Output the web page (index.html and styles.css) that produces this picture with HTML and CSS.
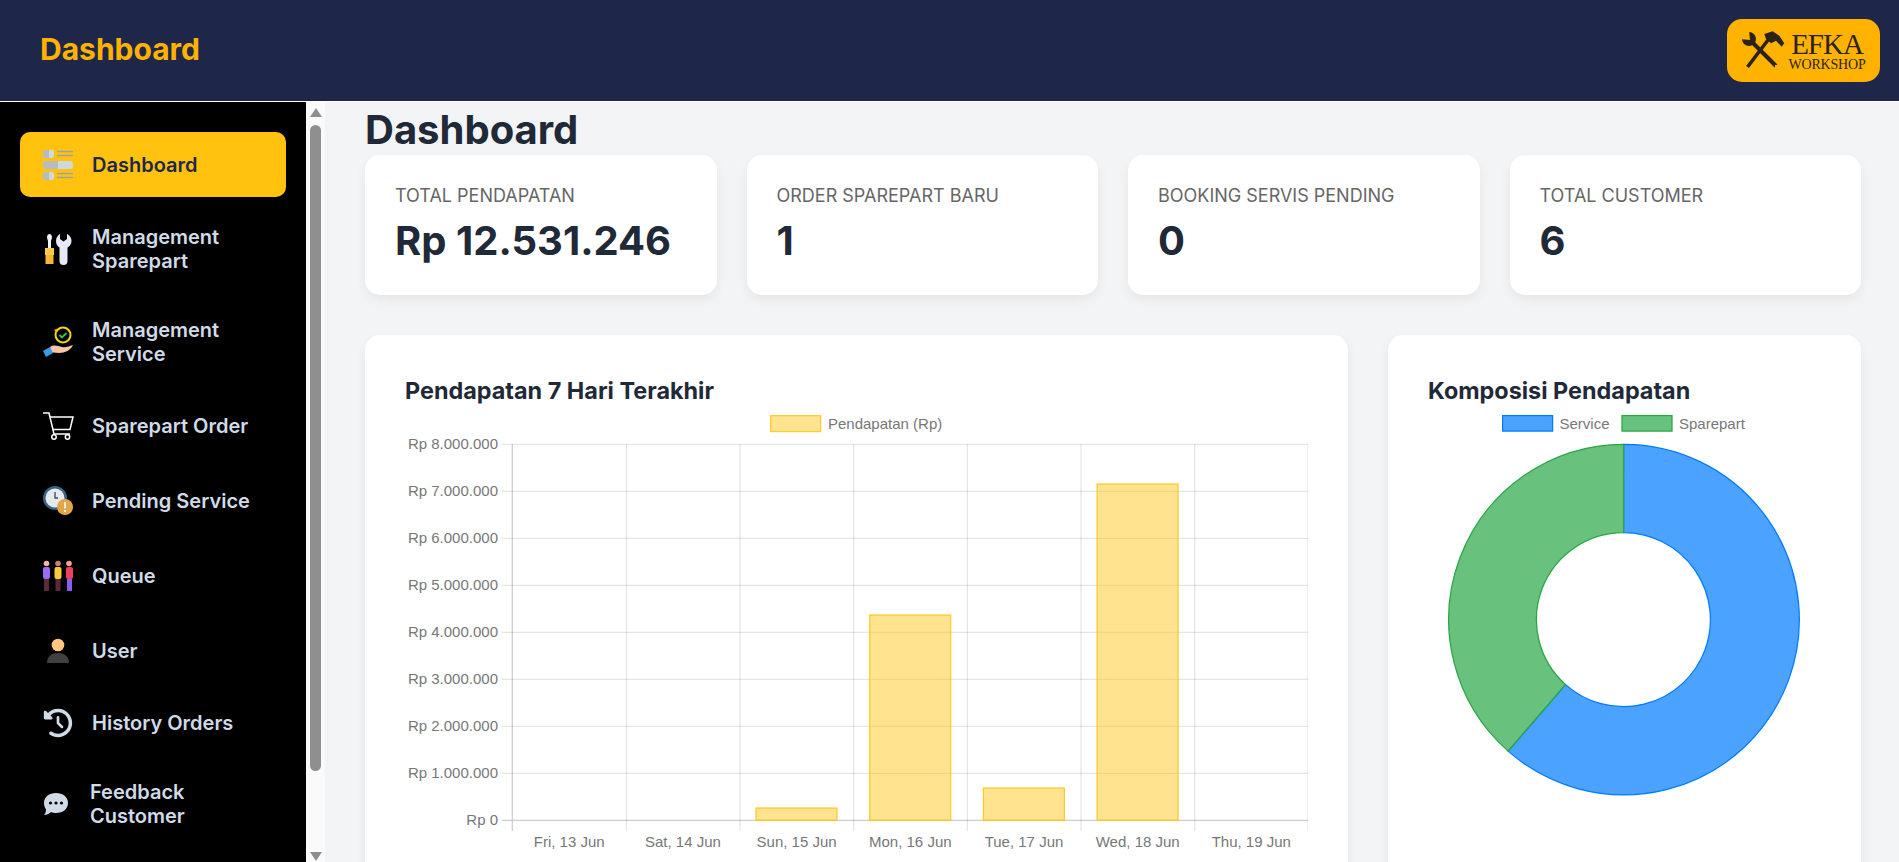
FILE: index.html
```html
<!doctype html>
<html>
  <head>
    <title>Dashboard</title>
    <link rel="stylesheet" href="styles.css">
  </head>
  <body>
    <header class="topbar">
      <div class="topbar-title">Dashboard</div>
      <div class="logo">
        <svg class="logo-icon" viewBox="0 0 45 40">
          <path class="logo-line" d="M6.500 36 L27 9" stroke-width="3.600"/>
          <path class="logo-fill" d="M23.300 3 L31.700 .3 L38.300 4.700 L43.300 12.300 L40.700 15.700 L35 9.700 L30 12.300 L25 8 Z"/>
          <path class="logo-line" d="M10 10 L35 35" stroke-width="4"/>
          <circle class="logo-fill" cx="8" cy="8" r="7"/>
          <path class="logo-notch" d="M9 9 L8 -1 L-1 -1 L-1 8 Z"/>
          <circle class="logo-notch" cx="35" cy="35" r="1.200"/>
        </svg>
        <div class="logo-text">
          <div class="logo-name">EFKA</div>
          <div class="logo-sub">WORKSHOP</div>
        </div>
      </div>
    </header>

    <div class="layout">
      <aside class="sidebar">
        <nav class="nav">
          <a class="nav-item active">
            <svg class="nav-icon" viewBox="0 0 40 40">
              <rect x="5" y="5" width="11" height="8" rx="2" fill="#cfd8dd"/>
              <path d="M7 5 H11 V13 H7 a2 2 0 0 1 -2 -2 V7 a2 2 0 0 1 2 -2 Z" fill="#b4bcc2"/>
              <path d="M19 6.500 H35 M19 10.500 H35" stroke="#9aa3a8" stroke-width="1.600"/>
              <rect x="5" y="16" width="30" height="8" rx="3" fill="#cfd8dd"/>
              <path d="M8 16 H20 V24 H8 a3 3 0 0 1 -3 -3 V19 a3 3 0 0 1 3 -3 Z" fill="#b4bcc2"/>
              <rect x="5" y="27" width="11" height="8" rx="2" fill="#cfd8dd"/>
              <path d="M7 27 H11 V35 H7 a2 2 0 0 1 -2 -2 V29 a2 2 0 0 1 2 -2 Z" fill="#b4bcc2"/>
              <path d="M19 28.500 H35 M19 32.500 H35" stroke="#9aa3a8" stroke-width="1.600"/>
            </svg>
            <span class="nav-text">Dashboard</span>
          </a>
          <a class="nav-item tall">
            <svg class="nav-icon" viewBox="0 0 40 40">
              <path d="M11.500 5 C13 5 14 6.500 14 8 C14 10 13 11 13 12.500 V19 H10 V12.500 C10 11 9 10 9 8 C9 6.500 10 5 11.500 5 Z" fill="#f2f4fa"/>
              <path d="M7 19 H16 V26 H7 Z" fill="#fdc845"/>
              <path d="M7.500 26 H15.500 V35 H7.500 Z" fill="#f4b838"/>
              <path d="M22 5 V10 L25.500 12.500 L29 10 V5 C32 6.500 33.500 9 33.500 12 C33.500 15 31.500 17.500 29.500 18.500 V32 a3.800 3.800 0 0 1 -8 0 V18.500 C19.500 17.500 18 15 18 12 C18 9 19.500 6.500 22 5 Z" fill="#e6eaf6"/>
            </svg>
            <span class="nav-text">Management Sparepart</span>
          </a>
          <a class="nav-item tall">
            <svg class="nav-icon" viewBox="0 0 40 40">
              <circle cx="25" cy="13" r="7.500" fill="none" stroke="#f5d90a" stroke-width="2"/>
              <path d="M21.500 13 L24 15.500 L28.500 11" fill="none" stroke="#35c45a" stroke-width="1.800"/>
              <path d="M16 8 L19 6.500 L18.500 11 Z" fill="#f5a70a"/>
              <path d="M12 25 C16 22 20 24 24 25 C28 26 31 24 35 23 C33 28 27 31 21 31 C18 31 15 30 13 31 Z" fill="#fbc6a8"/>
              <path d="M5 29 L12 25 L15 31 L8 35 Z" fill="#3c9be8"/>
            </svg>
            <span class="nav-text">Management Service</span>
          </a>
          <a class="nav-item">
            <svg class="nav-icon" viewBox="0 0 40 40">
              <path d="M5 7 H11 L16 28 H32" fill="none" stroke="#fff" stroke-width="1.500"/>
              <path d="M12 11 H35 L32 23.500 H14.600" fill="none" stroke="#fff" stroke-width="1.500"/>
              <circle cx="16" cy="31" r="2.200" fill="none" stroke="#fff" stroke-width="1.500"/>
              <circle cx="29.500" cy="31" r="2.200" fill="none" stroke="#fff" stroke-width="1.500"/>
            </svg>
            <span class="nav-text">Sparepart Order</span>
          </a>
          <a class="nav-item">
            <svg class="nav-icon" viewBox="0 0 40 40">
              <circle cx="17" cy="17" r="12" fill="#3b6282"/>
              <circle cx="17" cy="17" r="9.500" fill="#e3ebf1"/>
              <path d="M17 11 V17 H20" fill="none" stroke="#3b4a58" stroke-width="1.300"/>
              <circle cx="27" cy="26" r="8" fill="#e5a54b"/>
              <rect x="26" y="21" width="2" height="6.500" fill="#fbeed6"/>
              <rect x="26" y="29" width="2" height="2" fill="#fbeed6"/>
            </svg>
            <span class="nav-text">Pending Service</span>
          </a>
          <a class="nav-item">
            <svg class="nav-icon" viewBox="0 0 40 40">
              <circle cx="8.500" cy="7.500" r="2.800" fill="#f5b7a0"/>
              <rect x="5" y="11" width="7" height="12" rx="2" fill="#9a6cf0"/>
              <rect x="6" y="23" width="5" height="12" fill="#5a2a38"/>
              <circle cx="20" cy="7.500" r="2.800" fill="#c9826a"/>
              <rect x="16.500" y="11" width="7" height="12" rx="2" fill="#f8c93a"/>
              <rect x="17.500" y="23" width="5" height="12" fill="#5a2a38"/>
              <circle cx="31" cy="7.500" r="2.800" fill="#f5a090"/>
              <rect x="28" y="11" width="7" height="12" rx="2" fill="#ee3f5c"/>
              <rect x="29" y="23" width="5" height="12" fill="#8a5cf0"/>
            </svg>
            <span class="nav-text">Queue</span>
          </a>
          <a class="nav-item">
            <svg class="nav-icon" viewBox="0 0 40 40">
              <circle cx="20" cy="14" r="6.300" fill="#ffc67e"/>
              <path d="M9 32 C9 25 14 22 20 22 C26 22 31 25 31 32 Z" fill="#404040"/>
            </svg>
            <span class="nav-text">User</span>
          </a>
          <a class="nav-item short">
            <svg class="nav-icon" viewBox="-105 -105 722 722">
              <path fill="#d1dbe8" d="M75 75L41 41C25.900 25.900 0 36.600 0 57.900V168c0 13.300 10.700 24 24 24H134.100c21.400 0 32.100-25.900 17-41l-30.800-30.800C155 85.500 203 64 256 64c106 0 192 86 192 192s-86 192-192 192c-40.800 0-78.600-12.700-109.700-34.400c-14.500-10.100-34.400-6.600-44.600 7.900s-6.600 34.400 7.900 44.600C151.200 495 201.700 512 256 512c141.400 0 256-114.600 256-256S397.400 0 256 0C185.300 0 121.300 28.700 75 75zm181 53c-13.300 0-24 10.700-24 24V256c0 6.400 2.500 12.500 7 17l72 72c9.400 9.400 24.600 9.400 33.900 0s9.400-24.600 0-33.900l-65-65V152c0-13.300-10.700-24-24-24z"/>
            </svg>
            <span class="nav-text">History Orders</span>
          </a>
          <a class="nav-item tall shifted">
            <svg class="nav-icon" viewBox="0 0 40 40">
              <path d="M20 9 C27 9 32 13 32 19 C32 25 27 29 20 29 C18 29 16.500 28.700 15 28 C13 30 10.500 31 8 31 C9.500 29.500 10 27.500 10 25.500 C8.700 23.800 8 21.500 8 19 C8 13 13 9 20 9 Z" fill="#d1dbe8"/>
              <circle cx="14.500" cy="19" r="1.600" fill="#000"/>
              <circle cx="20" cy="19" r="1.600" fill="#000"/>
              <circle cx="25.500" cy="19" r="1.600" fill="#000"/>
            </svg>
            <span class="nav-text">Feedback Customer</span>
          </a>
        </nav>
        <div class="scrollbar">
          <div class="arrow-up"></div>
          <div class="thumb"></div>
          <div class="arrow-down"></div>
        </div>
      </aside>

      <main class="content">
        <h1 class="page-title">Dashboard</h1>

        <section class="stats">
          <div class="card stat">
            <div class="stat-label">TOTAL PENDAPATAN</div>
            <div class="stat-value">Rp 12.531.246</div>
          </div>
          <div class="card stat">
            <div class="stat-label">ORDER SPAREPART BARU</div>
            <div class="stat-value">1</div>
          </div>
          <div class="card stat">
            <div class="stat-label">BOOKING SERVIS PENDING</div>
            <div class="stat-value">0</div>
          </div>
          <div class="card stat">
            <div class="stat-label">TOTAL CUSTOMER</div>
            <div class="stat-value">6</div>
          </div>
        </section>

        <section class="charts">
          <div class="card chart-card">
            <h2 class="chart-title">Pendapatan 7 Hari Terakhir</h2>
            <svg class="chart" viewBox="0 0 903 470" width="903" height="470">
              <rect class="legend-bar" x="365.600" y="9.600" width="50" height="16"/>
              <text class="chart-text" x="423" y="23">Pendapatan (Rp)</text>

              <g class="grid">
                <path d="M97 38.300H903M97 85.300H903M97 132.300H903M97 179.300H903M97 226.300H903M97 273.300H903M97 320.300H903M97 367.300H903"/>
                <path d="M221.500 38.300V425M335 38.300V425M448.700 38.300V425M562.400 38.300V425M676 38.300V425M789.700 38.300V425M903 38.300V425"/>
              </g>
              <path class="axis" d="M107.300 38.300V425M97 414.300H903"/>

              <rect class="bar" x="351" y="402" width="81" height="12.300"/>
              <rect class="bar" x="464.700" y="209" width="81" height="205.300"/>
              <rect class="bar" x="578.400" y="382" width="81" height="32.300"/>
              <rect class="bar" x="692.100" y="78" width="81" height="336.300"/>

              <g class="chart-text" text-anchor="end">
                <text x="93" y="43.300">Rp 8.000.000</text>
                <text x="93" y="90.300">Rp 7.000.000</text>
                <text x="93" y="137.300">Rp 6.000.000</text>
                <text x="93" y="184.300">Rp 5.000.000</text>
                <text x="93" y="231.300">Rp 4.000.000</text>
                <text x="93" y="278.300">Rp 3.000.000</text>
                <text x="93" y="325.300">Rp 2.000.000</text>
                <text x="93" y="372.300">Rp 1.000.000</text>
                <text x="93" y="419.300">Rp 0</text>
              </g>
              <g class="chart-text" text-anchor="middle">
                <text x="164.200" y="441">Fri, 13 Jun</text>
                <text x="277.900" y="441">Sat, 14 Jun</text>
                <text x="391.600" y="441">Sun, 15 Jun</text>
                <text x="505.300" y="441">Mon, 16 Jun</text>
                <text x="619" y="441">Tue, 17 Jun</text>
                <text x="732.700" y="441">Wed, 18 Jun</text>
                <text x="846.300" y="441">Thu, 19 Jun</text>
              </g>
            </svg>
          </div>

          <div class="card chart-card">
            <h2 class="chart-title">Komposisi Pendapatan</h2>
            <svg class="chart" viewBox="0 0 393 470" width="393" height="470">
              <rect class="slice-blue" x="74.600" y="9.600" width="50" height="15.500"/>
              <text class="chart-text" x="131.500" y="23">Service</text>
              <rect class="slice-green" x="194" y="9.600" width="50" height="15.500"/>
              <text class="chart-text" x="251" y="23">Sparepart</text>

              <path class="slice-blue" d="M195.600 38.300 A175.300 175.300 0 1 1 80.100 345.100 L137.600 278.600 A87 87 0 1 0 195.600 126.600 Z"/>
              <path class="slice-green" d="M195.600 38.300 A175.300 175.300 0 0 0 80.100 345.100 L137.600 278.600 A87 87 0 0 1 195.600 126.600 Z"/>
            </svg>
          </div>
        </section>
      </main>
    </div>
  </body>
</html>
```

FILE: styles.css
```css
* { box-sizing: border-box; }
html, body { height: 100%; }
body {
  margin: 0;
  font-family: "Inter", "Liberation Sans", sans-serif;
  background: #f3f4f6;
  color: #1f2937;
  display: flex;
  flex-direction: column;
  overflow: hidden;
}

/* top bar */
.topbar {
  flex: none;
  height: 102px;
  background: #1e2749;
  border-bottom: 1px solid #fff;
  display: flex;
  align-items: center;
  justify-content: space-between;
  padding: 0 19px 0 40px;
}
.topbar-title {
  font-size: 30px;
  line-height: 36px;
  margin-bottom: 3px;
  font-weight: 700;
  color: #ffb300;
}
.logo {
  width: 153px;
  height: 63px;
  background: #ffb300;
  border-radius: 15px;
  display: flex;
  align-items: center;
  gap: 2px;
  padding-left: 14px;
  color: #2b2318;
}
.logo-icon { width: 45px; height: 40px; overflow: visible; flex: none; }
.logo-line { stroke: #2b2318; fill: none; }
.logo-fill { fill: #2b2318; }
.logo-notch { fill: #ffb300; }
.logo-text {
  width: 78px;
  font-family: "Liberation Serif", serif;
  text-align: center;
}
.logo-name { font-size: 29px; line-height: 30px; letter-spacing: -1px; }
.logo-sub { font-size: 14px; line-height: 14px; letter-spacing: -.2px; margin-top: -1px; }

/* sidebar */
.layout {
  flex: 1;
  min-height: 0;
  display: flex;
}
.sidebar {
  flex: none;
  width: 325px;
  display: flex;
}
.nav {
  width: 306px;
  background: #000;
  padding: 30px 20px 0;
  display: flex;
  flex-direction: column;
  gap: 10px;
}
.nav-item {
  min-height: 65px;
  padding-left: 18px;
  border-radius: 10px;
  display: flex;
  align-items: center;
  gap: 14px;
  color: #d1dbe8;
  font-size: 20px;
  font-weight: 600;
  line-height: 24px;
}
.nav-item.tall { min-height: 83px; }
.nav-item.short { min-height: 59px; }
.nav-item.shifted { padding-left: 16px; }
.nav-item.active {
  background: #ffc20e;
  color: #1e2749;
}
.nav-icon { width: 40px; height: 40px; flex: none; }
.nav-text { max-width: 175px; }

.scrollbar {
  width: 19px;
  background: #fafafa;
  display: flex;
  flex-direction: column;
  align-items: center;
  padding-top: 6px;
}
.arrow-up, .arrow-down {
  width: 0;
  height: 0;
  border-left: 6.5px solid transparent;
  border-right: 6.5px solid transparent;
}
.arrow-up { border-bottom: 9px solid #8f8f8f; }
.arrow-down { border-top: 9px solid #8f8f8f; margin-top: 81px; }
.thumb {
  width: 11px;
  height: 646px;
  margin-top: 8px;
  background: #8f8f8f;
  border-radius: 6px;
}

/* main */
.content {
  flex: 1;
  min-width: 0;
  padding: 4px 38px 0 40px;
  overflow: hidden;
}
.page-title {
  margin: 0 0 1px;
  font-size: 40px;
  line-height: 48px;
  font-weight: 700;
}
.card {
  background: #fff;
  border-radius: 15px;
  box-shadow: 0 5px 12px rgba(0, 0, 0, .06);
}
.stats {
  display: grid;
  grid-template-columns: repeat(4, 1fr);
  gap: 30px;
}
.stat {
  height: 140px;
  padding: 30px;
}
.stat-label {
  font-size: 18px;
  line-height: 22px;
  color: #666;
}
.stat-value {
  margin-top: 10px;
  font-size: 40px;
  line-height: 48px;
  font-weight: 700;
}
.charts {
  margin-top: 40px;
  display: grid;
  grid-template-columns: 1fr 473px;
  gap: 40px;
}
.chart-card { padding: 42px 40px 40px; }
.chart-title {
  margin: 0 0 2px;
  font-size: 23.4px;
  line-height: 27px;
  font-weight: 700;
  color: #1f2937;
}
.chart { display: block; }
.chart-text {
  font-family: "Liberation Sans", Arial, sans-serif;
  font-size: 15px;
  fill: #777;
}
.grid path { fill: none; stroke: rgba(0, 0, 0, .1); stroke-width: 1.25; }
.axis { fill: none; stroke: rgba(0, 0, 0, .2); stroke-width: 1.25; }
.bar, .legend-bar {
  fill: rgba(255, 193, 7, .45);
  stroke: rgba(255, 193, 7, .8);
  stroke-width: 1.25;
}
.slice-blue {
  fill: rgba(0, 123, 255, .7);
  stroke: #007bff;
  stroke-width: 1.25;
}
.slice-green {
  fill: rgba(40, 167, 69, .7);
  stroke: #28a745;
  stroke-width: 1.25;
}
```
